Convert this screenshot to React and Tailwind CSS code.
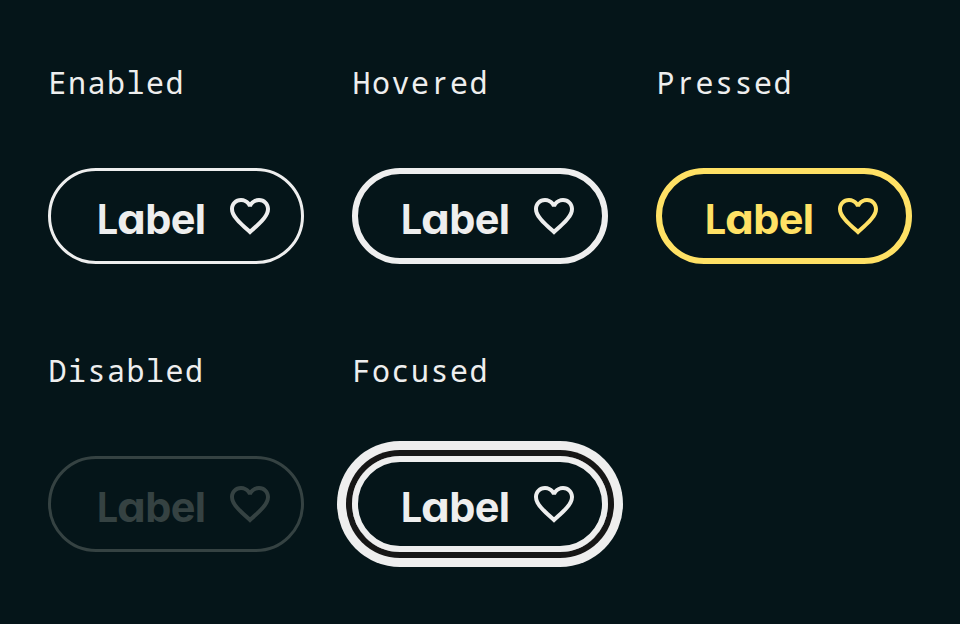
import React from "react";

const tones = {
  Enabled: "border-3 border-[#eeeeee] text-[#eeeeee]",
  Hovered: "border-6 border-[#eeeeee] text-[#eeeeee]",
  Pressed: "border-6 border-[#ffe165] text-[#ffe165]",
  Disabled: "border-3 border-[#354242] text-[#354242]",
  Focused:
    "border-6 border-[#eeeeee] text-[#eeeeee] shadow-[0_0_0_6px_#161616,0_0_0_15px_#eeeeee]",
};

function Heart() {
  return (
    <svg viewBox="0 0 24 24" className="h-12 w-12 shrink-0" fill="currentColor" aria-hidden="true">
      <path d="M16.5 3c-1.74 0-3.41.81-4.5 2.09C10.91 3.81 9.24 3 7.5 3 4.42 3 2 5.42 2 8.5c0 3.78 3.4 6.86 8.55 11.54L12 21.35l1.45-1.32C18.6 15.36 22 12.28 22 8.5 22 5.42 19.58 3 16.5 3zm-4.4 15.55l-.1.1-.1-.1C7.14 14.24 4 11.39 4 8.5 4 6.5 5.5 5 7.5 5c1.54 0 3.04.99 3.57 2.36h1.87C13.46 5.99 14.96 5 16.5 5c2 0 3.5 1.5 3.5 3.5 0 2.89-3.14 5.74-7.9 10.05z" />
    </svg>
  );
}

/* Sets the "r" without slab serifs, in a cell of the monospace width. */
function Title({ text }) {
  return text.split(/(r)/).map((part, i) =>
    part === "r" ? (
      <span key={i} className="inline-block w-[19.5px] pl-[3px] font-['Noto_Sans',sans-serif] leading-6">
        r
      </span>
    ) : (
      part
    ),
  );
}

function Sample({ name }) {
  return (
    <section className="h-72">
      <h2 className="-mt-px h-[49px] pl-[0.4px] font-['Noto_Sans_Mono','DejaVu_Sans_Mono',monospace] text-[30px] leading-6 tracking-[1.5px] whitespace-nowrap text-[#eeeeee]">
        <Title text={name} />
      </h2>
      <button
        disabled={name === "Disabled"}
        className={`mt-12 flex h-24 w-64 items-center justify-center rounded-full pl-[18px] ${tones[name]}`}
      >
        <span className="flex w-[178px] items-center justify-between">
          <span className="pt-[5px] pl-[1.2px] font-['Inter',sans-serif] text-[41.5px] leading-[48px] font-[750] tracking-[-0.6px] whitespace-nowrap [font-feature-settings:'cv11']">
            <span className="inline-block w-[20px] origin-left scale-x-[0.9] text-left">L</span>
            <span className="inline-block w-[28px] origin-left scale-x-[1.1] text-left">a</span>
            bel
          </span>
          <Heart />
        </span>
      </button>
    </section>
  );
}

export default function App() {
  return (
    <main className="h-[624px] w-[960px] overflow-hidden bg-[#051519] px-12 pt-[72px]">
      <div className="grid grid-cols-[256px_256px_256px] gap-x-12">
        {Object.keys(tones).map((name) => (
          <Sample key={name} name={name} />
        ))}
      </div>
    </main>
  );
}
